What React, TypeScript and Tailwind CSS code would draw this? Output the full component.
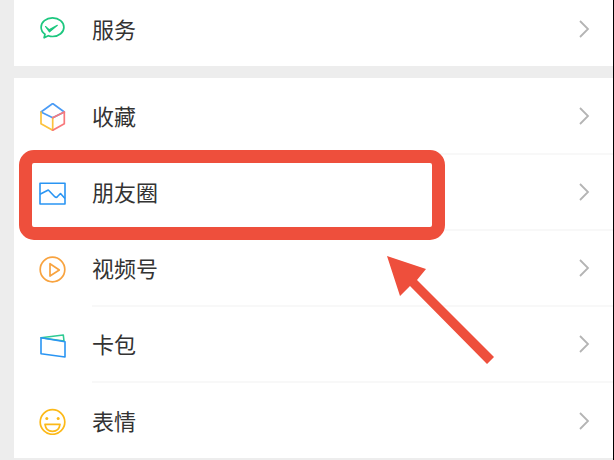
import React from 'react'

const ServiceIcon = () => (
  <svg width="28" height="28" viewBox="0 0 28 28" fill="none">
    <path d="M14.5 2.8c-6.4 0-11.4 4.2-11.4 9.4 0 2.9 1.5 5.3 3.9 7l-.9 3.6 4.2-2.1c1.3.5 2.7.8 4.2.8 6.400 0 11.400-4.200 11.400-9.300S20.900 2.800 14.500 2.800z" stroke="#1dc77f" strokeWidth="1.700" strokeLinejoin="round" />
    <path d="M7.500 11.500l3.600 3.200 8.200-4.300-7.800 6.500z" fill="#1dc77f" stroke="#1dc77f" strokeWidth="1.200" strokeLinejoin="round" />
  </svg>
)

const FavoriteIcon = () => (
  <svg width="28" height="28" viewBox="0 0 28 28" fill="none" strokeWidth="1.700" strokeLinejoin="round" strokeLinecap="round">
    <path d="M14.700 14.700L3 9l11.700-8.500L26.300 9z" stroke="#4a9bf5" />
    <path d="M3 9v11.700l11.700 6.600V14.700" stroke="#fcc23d" />
    <path d="M26.300 9v11.700l-11.600 6.600" stroke="#f8797c" />
    <path d="M14.700 14.700L26.300 9" stroke="#f8797c" />
  </svg>
)

const MomentsIcon = () => (
  <svg width="28" height="28" viewBox="0 0 28 28" fill="none" stroke="#2a95f3" strokeWidth="1.600" strokeLinejoin="round">
    <rect x="2" y="4.200" width="25" height="20.800" />
    <path d="M2 15.300L10.300 11l6 6.300c1.200 1.400 2.400 1.400 3.200.2L22.500 14.500 27 19.500" />
  </svg>
)

const ChannelsIcon = () => (
  <svg width="28" height="28" viewBox="0 0 28 28" fill="none" stroke="#f8a33f" strokeWidth="1.700" strokeLinejoin="round">
    <circle cx="14.500" cy="14.500" r="12.300" />
    <path d="M12 8.700l9.300 6.300-9.300 6z" />
  </svg>
)

const CardIcon = () => (
  <svg width="28" height="28" viewBox="0 0 28 28" fill="none" strokeWidth="1.600" strokeLinejoin="round">
    <path d="M3 6.700L25.300 4l.7 6z" stroke="#2ecb93" />
    <path d="M3 6.700l24 4V26L3 22.700z" stroke="#2a95f3" />
  </svg>
)

const StickerIcon = () => (
  <svg width="28" height="28" viewBox="0 0 28 28" fill="none" stroke="#fcb918" strokeWidth="1.700" strokeLinejoin="round">
    <circle cx="14.500" cy="15" r="12.300" />
    <circle cx="8.800" cy="11.500" r="1.500" fill="#fcb918" stroke="none" />
    <circle cx="20.200" cy="11.500" r="1.500" fill="#fcb918" stroke="none" />
    <path d="M7 17.300h15c-.6 4.500-3.600 7-7.500 7s-6.900-2.500-7.500-7z" />
  </svg>
)

const Chevron = () => (
  <svg width="12" height="18" viewBox="0 0 12 18" fill="none" className="shrink-0">
    <path d="M2 1l8 8-8 8" stroke="#b4b4b4" strokeWidth="1.800" />
  </svg>
)

interface RowProps {
  icon: React.ReactNode
  label: string
  height: string
  last?: boolean
}

const Row = ({ icon, label, height, last }: RowProps) => (
  <div className={`${height} pl-[24px] flex`}>
    <div className="w-[28px] shrink-0 self-center">{icon}</div>
    <div className={last ? 'ml-[26px] flex-1 flex items-center pr-[23px]' : 'ml-[26px] flex-1 flex items-center pr-[23px] border-b-2 border-[#f8f8f8]'}>
      <span className="flex-1 -mt-[2px] text-[22px] leading-none text-[#333333]">{label}</span>
      <Chevron />
    </div>
  </div>
)

export default function App() {
  return (
    <div className="relative w-[614px] h-[460px] overflow-hidden bg-[#ededed] pl-[14px] pr-[1px] font-['Noto_Sans_CJK_SC','Noto_Sans',sans-serif]">
      <div className="absolute right-0 top-0 bottom-0 w-[1px] bg-black" />
      <div className="bg-white pb-[8px]">
        <Row last height="h-[58px]" icon={<ServiceIcon />} label="服务" />
      </div>
      <div className="mt-[12px] bg-white">
        <Row height="h-[77px]" icon={<FavoriteIcon />} label="收藏" />
        <Row height="h-[76px]" icon={<MomentsIcon />} label="朋友圈" />
        <Row height="h-[76px]" icon={<ChannelsIcon />} label="视频号" />
        <Row height="h-[76px]" icon={<CardIcon />} label="卡包" />
        <Row last height="h-[75px]" icon={<StickerIcon />} label="表情" />
      </div>

      {/* red annotation on top of the list */}
      <div className="absolute left-[19px] top-[150px] w-[426px] h-[90px] border-[13px] border-[#ee4f3c] rounded-[15px]" />
      <svg className="absolute left-0 top-0" width="614" height="460" viewBox="0 0 614 460">
        <path d="M387 256L426 269 417 280 494 357 487 364 410 286 400 296z" fill="#ee4f3c" />
      </svg>
    </div>
  )
}
